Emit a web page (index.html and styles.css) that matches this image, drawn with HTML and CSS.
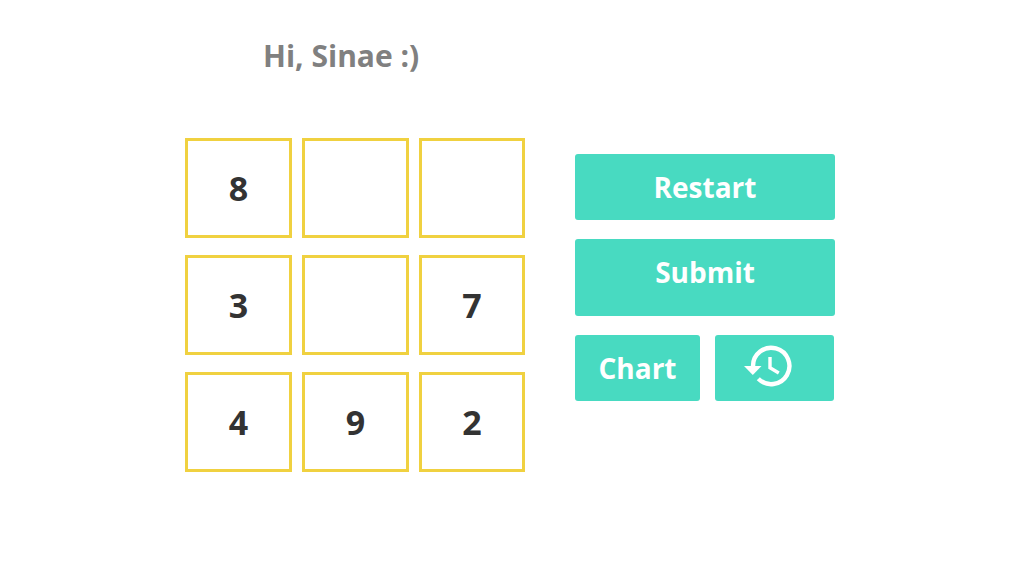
FILE: index.html
```html
<!DOCTYPE html>
<html lang="en">
<head>
<meta charset="utf-8">
<meta name="viewport" content="width=device-width, initial-scale=1">
<title>Number puzzle</title>
<link rel="stylesheet" href="styles.css">
</head>
<body>
<main class="game">
  <h1 class="greeting">Hi, Sinae :)</h1>
  <div class="play">
    <section class="board" aria-label="Board">
      <button class="tile">8</button>
      <button class="tile" aria-label="Empty"></button>
      <button class="tile" aria-label="Empty"></button>
      <button class="tile">3</button>
      <button class="tile" aria-label="Empty"></button>
      <button class="tile">7</button>
      <button class="tile">4</button>
      <button class="tile">9</button>
      <button class="tile">2</button>
    </section>
    <div class="actions">
      <button class="action">Restart</button>
      <button class="action submit">Submit</button>
      <div class="pair">
        <button class="action chart">Chart</button>
        <button class="action history" aria-label="History">
          <svg class="history-icon" viewBox="0 0 48 42" aria-hidden="true">
            <path d="M9 21A18.200 18.200 0 1 1 14.300 33.800" fill="none" stroke="currentColor" stroke-width="4.400"/>
            <path d="M0 21H17.500L8.800 30Z" fill="currentColor"/>
            <path d="M26 12V22.800L34.800 28" fill="none" stroke="currentColor" stroke-width="3.400"/>
          </svg>
        </button>
      </div>
    </div>
  </div>
</main>
</body>
</html>
```
FILE: styles.css
```css
* { box-sizing: border-box; }
body { margin: 0; padding-right: 11px; background: #fff; font-family: "Open Sans", "Noto Sans", sans-serif; }
button { font: inherit; cursor: pointer; }
.game { max-width: 650px; margin: 0 auto; padding-top: 36px; }
.greeting { margin: 0; padding-left: 78px; color: #808080; font-size: 30px; line-height: 40px; font-weight: 700; }
.play { display: flex; gap: 50px; margin-top: 62px; align-items: flex-start; }
.board { flex: 340px 0 1; display: grid; grid-template-columns: 107fr 107fr 106fr; gap: 17px 10px; }
.tile { height: 100px; padding: 0 0 1px; border: 3px solid #f0d140; background: #fff; color: #333; font-size: 34px; font-weight: 700; }
.actions { flex: 1; display: flex; flex-direction: column; gap: 19px; padding-top: 16px; }
.action { height: 66px; padding: 0; border: 0; border-radius: 3px; background: #48dac1; color: #fff; font-size: 28px; line-height: 40px; font-weight: 700; }
.submit { height: 77px; padding-bottom: 11px; }
.pair { display: grid; grid-template-columns: 125fr 119fr; gap: 15px; padding-right: 1px; }
.history { display: flex; align-items: center; justify-content: center; padding: 0 13px 4px 0; }
.history-icon { width: 48px; height: 42px; }
```
